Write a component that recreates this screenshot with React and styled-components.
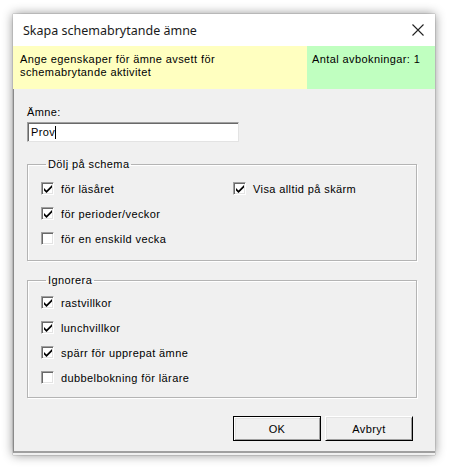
import React from "react";
import styled, { createGlobalStyle } from "styled-components";

const GlobalStyle = createGlobalStyle`
  html, body {
    margin: 0;
    padding: 0;
    background: #ffffff;
  }
  body {
    font-family: "Liberation Sans", Arial, sans-serif;
    font-size: 11px;
    letter-spacing: 0.4px;
    color: #000;
  }
`;

const Page = styled.div`
  padding: 14px 0 0 13px;
  height: 470px;
  box-sizing: border-box;
`;

const Dialog = styled.div`
  width: 422px;
  height: 441px;
  display: flex;
  flex-direction: column;
  background: #f0f0f0;
  box-shadow: 0 0 10px rgba(0, 0, 0, 0.45), 0 0 1px rgba(0, 0, 0, 0.5);
`;

const TitleBar = styled.div`
  height: 32px;
  background: #ffffff;
  display: flex;
  align-items: center;
  justify-content: space-between;
  padding: 0 11px 0 10px;
`;

const Title = styled.span`
  font-family: "Noto Sans", "Open Sans", sans-serif;
  font-size: 12.5px;
  letter-spacing: 0;
  color: #1a1a1a;
`;

const CloseIcon = () => (
  <svg width="12" height="12" viewBox="0 0 12 12">
    <path d="M0.5 0.5 L11.5 11.5 M11.5 0.5 L0.5 11.5" stroke="#222" strokeWidth="1.1" />
  </svg>
);

const InfoBand = styled.div`
  display: grid;
  grid-template-columns: 294px 1fr;
  height: 43px;
`;

const InfoCell = styled.div`
  background: ${({ $tone }) => ($tone === "green" ? "#c0ffc0" : "#ffffc0")};
  padding: ${({ $tone }) => ($tone === "green" ? "7px 5px" : "7px 7px")};
  line-height: 13px;
`;

const Body = styled.div`
  flex: 1;
  padding: 17px 18px 0 13px;
  border-left: 1px solid #8a8a8a;
  border-bottom: 2px solid #a0a0a0;
  margin-bottom: 2px;
  display: flex;
  flex-direction: column;
`;

const Label = styled.div`
  line-height: 13px;
  margin-bottom: 3px;
`;

const TextInput = styled.div`
  width: 212px;
  height: 20px;
  box-sizing: border-box;
  background: #fff;
  border-top: 1px solid #a0a0a0;
  border-left: 1px solid #a0a0a0;
  border-right: 1px solid #e3e3e3;
  border-bottom: 1px solid #e3e3e3;
  box-shadow: inset 1px 1px 0 #696969;
  display: flex;
  align-items: center;
  padding-left: 3px;
`;

const Caret = styled.span`
  display: inline-block;
  width: 1px;
  height: 13px;
  background: #000;
`;

const Group = styled.fieldset`
  margin: ${({ $top }) => $top}px 0 0 0;
  padding: ${({ $pt }) => $pt}px 0 ${({ $pb }) => $pb}px 13px;
  border: 1px solid #b4b4b4;
  box-shadow: inset 1px 1px 0 #fff, 1px 1px 0 #fff;
  min-width: 0;
`;

const Legend = styled.legend`
  margin-left: 5px;
  padding: 0 2px;
  line-height: 13px;
`;

const Grid = styled.div`
  display: grid;
  grid-template-columns: 192px 1fr;
  grid-auto-rows: 25px;
`;

const Row = styled.label`
  display: flex;
  align-items: center;
  gap: 7px;
  height: 25px;
`;

const Box = styled.span`
  width: 13px;
  height: 13px;
  box-sizing: border-box;
  background: #fff;
  border-top: 1px solid #a0a0a0;
  border-left: 1px solid #a0a0a0;
  border-right: 1px solid #fff;
  border-bottom: 1px solid #fff;
  box-shadow: inset 1px 1px 0 #696969, inset -1px -1px 0 #e3e3e3;
  display: flex;
  align-items: center;
  justify-content: center;
`;

const Check = ({ checked, children }) => (
  <Row>
    <Box>
      {checked && (
        <svg width="8" height="8" viewBox="0 0 8 8" style={{ marginLeft: 1, marginTop: 1 }}>
          <path d="M0 3 L0 5.5 L2.5 8 L8 2.5 L8 0 L2.5 5.5 Z" fill="#000" />
        </svg>
      )}
    </Box>
    <span>{children}</span>
  </Row>
);

const Buttons = styled.div`
  display: flex;
  justify-content: flex-end;
  gap: 4px;
  margin-top: 18px;
  padding-right: 4px;
`;

const Button = styled.div`
  width: 88px;
  height: 25px;
  box-sizing: border-box;
  display: flex;
  align-items: center;
  justify-content: center;
  background: #f0f0f0;
  border: 1px solid ${({ $default }) => ($default ? "#000" : "#fff")};
  border-right-color: #000;
  border-bottom-color: #000;
  box-shadow: ${({ $default }) =>
    $default
      ? "inset 1px 1px 0 #fff, inset -1px -1px 0 #a0a0a0, inset 2px 2px 0 #e3e3e3"
      : "inset 1px 1px 0 #e3e3e3, inset -1px -1px 0 #a0a0a0"};
`;

export default function App() {
  return (
    <>
      <GlobalStyle />
      <Page>
        <Dialog>
          <TitleBar>
            <Title>Skapa schemabrytande ämne</Title>
            <CloseIcon />
          </TitleBar>
          <InfoBand>
            <InfoCell>
              Ange egenskaper för ämne avsett för
              <br />
              schemabrytande aktivitet
            </InfoCell>
            <InfoCell $tone="green">Antal avbokningar: 1</InfoCell>
          </InfoBand>
          <Body>
            <Label>Ämne:</Label>
            <TextInput>
              Prov<Caret />
            </TextInput>

            <Group $top={16} $pt={5} $pb={9}>
              <Legend>Dölj på schema</Legend>
              <Grid>
                <Check checked>för läsåret</Check>
                <Check checked>Visa alltid på skärm</Check>
                <Check checked>för perioder/veckor</Check>
                <span />
                <Check>för en enskild vecka</Check>
              </Grid>
            </Group>

            <Group $top={13} $pt={3} $pb={7}>
              <Legend>Ignorera</Legend>
              <Check checked>rastvillkor</Check>
              <Check checked>lunchvillkor</Check>
              <Check checked>spärr för upprepat ämne</Check>
              <Check>dubbelbokning för lärare</Check>
            </Group>

            <Buttons>
              <Button $default>OK</Button>
              <Button>Avbryt</Button>
            </Buttons>
          </Body>
        </Dialog>
      </Page>
    </>
  );
}
